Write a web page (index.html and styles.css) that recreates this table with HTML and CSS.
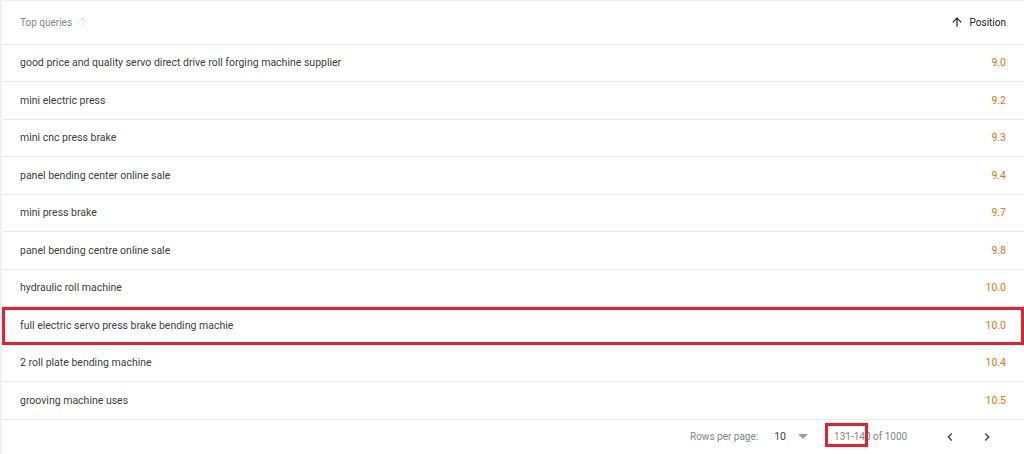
FILE: index.html
```html
<!DOCTYPE html>
<html>
<head>
<meta charset="utf-8">
<link rel="stylesheet" href="styles.css">
</head>
<body>
<div class="table">
  <div class="row head">
    <div class="q">Top queries <svg width="14" height="14" viewBox="0 0 24 24"><path d="M4 12l1.41 1.41L11 7.83V20h2V7.83l5.58 5.59L20 12l-8-8-8 8z" fill="#e3e5e8"/></svg></div>
    <div class="p"><svg width="14" height="14" viewBox="0 0 24 24"><path d="M4 12l1.41 1.41L11 7.83V20h2V7.83l5.58 5.59L20 12l-8-8-8 8z" fill="#202124"/></svg><span>Position</span></div>
  </div>
  <div class="row"><div class="q">good price and quality servo direct drive roll forging machine supplier</div><div class="v">9.0</div></div>
  <div class="row"><div class="q">mini electric press</div><div class="v">9.2</div></div>
  <div class="row"><div class="q">mini cnc press brake</div><div class="v">9.3</div></div>
  <div class="row"><div class="q">panel bending center online sale</div><div class="v">9.4</div></div>
  <div class="row"><div class="q">mini press brake</div><div class="v">9.7</div></div>
  <div class="row"><div class="q">panel bending centre online sale</div><div class="v">9.8</div></div>
  <div class="row"><div class="q">hydraulic roll machine</div><div class="v">10.0</div></div>
  <div class="row mark"><div class="q">full electric servo press brake bending machie</div><div class="v">10.0</div></div>
  <div class="row"><div class="q">2 roll plate bending machine</div><div class="v">10.4</div></div>
  <div class="row"><div class="q">grooving machine uses</div><div class="v">10.5</div></div>
  <div class="foot">
    <span class="lbl">Rows per page:</span>
    <span class="sel">10 <svg width="10" height="5" viewBox="0 0 10 5"><path d="M0 0l5 5 5-5z" fill="#9aa0a6"/></svg></span>
    <span class="range"><span class="boxed">131-140</span> of 1000</span>
    <span class="nav">
      <svg width="16" height="16" viewBox="0 0 24 24"><path d="M15.41 7.41L14 6l-6 6 6 6 1.41-1.41L10.83 12z" fill="#3c4043"/></svg>
      <svg width="16" height="16" viewBox="0 0 24 24"><path d="M10 6L8.59 7.41 13.17 12l-4.58 4.59L10 18l6-6z" fill="#3c4043"/></svg>
    </span>
  </div>
</div>
</body>
</html>
```
FILE: styles.css
```css
html, body { margin: 0; padding: 0; background: #fff; }
body { font-family: Roboto, "Liberation Sans", sans-serif; font-size: 10.5px; color: #3c4043; }
.table {
  width: 1024px;
  height: 454px;
  box-sizing: border-box;
  border-top: 1px solid #eef0f3;
  border-left: 2px solid #eef1f5;
  display: flex;
  flex-direction: column;
}
.row {
  display: flex;
  align-items: center;
  justify-content: space-between;
  height: 37.5px;
  box-sizing: border-box;
  border-bottom: 1px solid #e8eaed;
  padding: 0 18px 0 18px;
  flex: none;
}
.row.head { height: 43.5px; font-size: 10px; }
.head .q { color: #80868b; display: flex; align-items: center; gap: 4px; }
.head .p { color: #202124; display: flex; align-items: center; gap: 6px; }
.v { color: #e8710a; }
.row.mark { outline: 3px solid #e8202e; outline-offset: -3px; }
.foot {
  flex: 1;
  display: flex;
  align-items: center;
  padding-left: 688px;
  color: #80868b;
  white-space: nowrap;
  font-size: 10px;
}
.foot > span { flex: none; }
.sel { color: #3c4043; margin-left: 16px; display: inline-flex; align-items: center; gap: 12px; font-size: 10.5px; }
.range { margin-left: 26px; }
.boxed { position: relative; }
.boxed::after {
  content: "";
  position: absolute;
  left: -9px;
  top: -8px;
  width: 43px;
  height: 24px;
  box-sizing: border-box;
  border: 3px solid #e8202e;
}
.nav { display: inline-flex; align-items: center; gap: 21px; margin-left: 35px; }
```
